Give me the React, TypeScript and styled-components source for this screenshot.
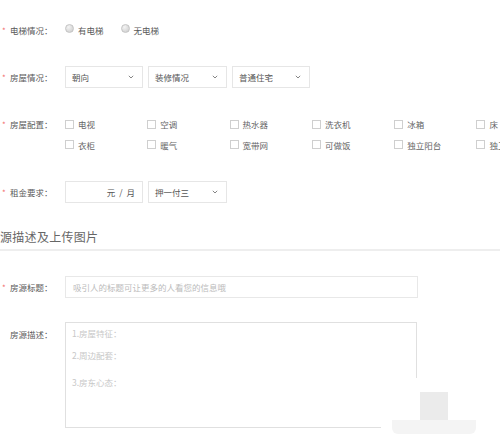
import React from "react";
import styled, { createGlobalStyle } from "styled-components";

const Global = createGlobalStyle`
  html, body { margin: 0; padding: 0; background: #fff; }
  body { width: 500px; height: 436px; overflow: hidden; font-family: "Noto Sans CJK SC", "Noto Sans", sans-serif; }
  #root { width: 500px; height: 436px; position: relative; overflow: hidden; }
`;

const Page = styled.div`
  display: flex;
  flex-direction: column;
  width: 500px;
  font-size: 8.5px;
  color: #555;
`;

const Row = styled.div<{ $top: number; $h: number; $align?: string }>`
  display: flex;
  align-items: ${(p) => p.$align || "center"};
  margin-top: ${(p) => p.$top}px;
  min-height: ${(p) => p.$h}px;
`;

const Label = styled.div<{ $pt?: number }>`
  width: 65px;
  flex: none;
  display: flex;
  align-items: center;
  padding-top: ${(p) => p.$pt || 0}px;
  box-sizing: border-box;
  color: #5a5a5a;
  white-space: nowrap;
`;

const Star = styled.span<{ $hide?: boolean }>`
  width: 10px;
  padding-left: 2px;
  box-sizing: border-box;
  color: #f36b6b;
  font-size: 8px;
  visibility: ${(p) => (p.$hide ? "hidden" : "visible")};
`;

const RadioGroup = styled.div`
  display: flex;
  align-items: center;
  gap: 17px;
`;

const RadioItem = styled.label`
  display: flex;
  align-items: center;
  gap: 4px;
  color: #5a5a5a;
`;

const RadioDot = styled.span`
  width: 7px;
  height: 7px;
  border-radius: 50%;
  background: radial-gradient(circle at 35% 30%, #f4f4f4, #c9c9c9);
  border: 0.5px solid #c4c4c4;
  margin-top: -3px;
`;

const Controls = styled.div`
  display: flex;
  gap: 5px;
`;

const Box = styled.div<{ $w: number; $h?: number }>`
  width: ${(p) => p.$w}px;
  height: ${(p) => p.$h || 22}px;
  border: 1px solid #e6e6e6;
  box-sizing: border-box;
  display: flex;
  align-items: center;
  flex: none;
`;

const SelectBox = styled(Box)`
  justify-content: space-between;
  padding: 0 8px 0 6px;
  color: #555;
`;

const RentBox = styled(Box)`
  justify-content: flex-end;
  padding-right: 7px;
  color: #555;
  word-spacing: 2px;
`;

const Chevron = () => (
  <svg width="6" height="4" viewBox="0 0 6 4">
    <path d="M0.8 0.8 L3 3 L5.2 0.8" fill="none" stroke="#777" strokeWidth="0.9" />
  </svg>
);

const CheckGrid = styled.div`
  display: grid;
  grid-template-columns: repeat(6, 82.3px);
  grid-auto-rows: 20.5px;
`;

const CheckItem = styled.div`
  display: flex;
  align-items: center;
  gap: 4px;
  color: #666;
  white-space: nowrap;
`;

const CheckSquare = styled.span`
  width: 7px;
  height: 7px;
  border: 1px solid #cfcfcf;
  flex: none;
`;

const Heading = styled.div`
  margin-top: 25px;
  font-size: 12px;
  color: #666;
  letter-spacing: 0.3px;
  line-height: 18px;
`;

const Divider = styled.div`
  margin-top: 3px;
  height: 2px;
  background: #eeeeee;
`;

const TitleInput = styled(Box)`
  padding-left: 7px;
  color: #bbb;
  border-color: #e8e8e8;
`;

const TextArea = styled.div`
  width: 352px;
  height: 106px;
  border: 1px solid #e0e0e0;
  box-sizing: border-box;
  padding: 4px 6px;
  color: #c8c8c8;
  display: flex;
  flex-direction: column;
`;

const Line = styled.div<{ $mt: number }>`
  margin-top: ${(p) => p.$mt}px;
  line-height: 12px;
`;

const Overlay = styled.div`
  position: absolute;
  left: 381px;
  top: 378px;
  width: 119px;
  height: 58px;
  background: #fff;
`;

const OverlayBlock = styled.div<{ $l: number; $t: number; $w: number; $h: number; $c: string; $r?: string }>`
  position: absolute;
  left: ${(p) => p.$l}px;
  top: ${(p) => p.$t}px;
  width: ${(p) => p.$w}px;
  height: ${(p) => p.$h}px;
  background: ${(p) => p.$c};
  border-radius: ${(p) => p.$r || "0"};
`;

const checks = [
  "电视", "空调", "热水器", "洗衣机", "冰箱", "床",
  "衣柜", "暖气", "宽带网", "可做饭", "独立阳台", "独卫",
];

export default function App() {
  return (
    <>
      <Global />
      <Page>
        <Row $top={21} $h={18}>
          <Label><Star>*</Star>电梯情况：</Label>
          <RadioGroup>
            <RadioItem><RadioDot />有电梯</RadioItem>
            <RadioItem><RadioDot />无电梯</RadioItem>
          </RadioGroup>
        </Row>

        <Row $top={27} $h={22}>
          <Label><Star>*</Star>房屋情况：</Label>
          <Controls>
            <SelectBox $w={78}>朝向<Chevron /></SelectBox>
            <SelectBox $w={79}>装修情况<Chevron /></SelectBox>
            <SelectBox $w={78}>普通住宅<Chevron /></SelectBox>
          </Controls>
        </Row>

        <Row $top={26} $h={41} $align="flex-start">
          <Label $pt={4}><Star>*</Star>房屋配置：</Label>
          <CheckGrid>
            {checks.map((c) => (
              <CheckItem key={c}><CheckSquare />{c}</CheckItem>
            ))}
          </CheckGrid>
        </Row>

        <Row $top={26} $h={22}>
          <Label><Star>*</Star>租金要求：</Label>
          <Controls>
            <RentBox $w={78}>元 / 月</RentBox>
            <SelectBox $w={79}>押一付三<Chevron /></SelectBox>
          </Controls>
        </Row>

        <Heading>源描述及上传图片</Heading>
        <Divider />

        <Row $top={25} $h={22}>
          <Label><Star>*</Star>房源标题：</Label>
          <TitleInput $w={353}>吸引人的标题可让更多的人看您的信息哦</TitleInput>
        </Row>

        <Row $top={24} $h={106} $align="flex-start">
          <Label $pt={6}><Star $hide>*</Star>房源描述：</Label>
          <TextArea>
            <Line $mt={0}>1.房屋特征：</Line>
            <Line $mt={10}>2.周边配套：</Line>
            <Line $mt={15}>3.房东心态：</Line>
          </TextArea>
        </Row>
      </Page>
      <Overlay>
        <OverlayBlock $l={39} $t={14} $w={28} $h={28} $c="#ebebeb" />
        <OverlayBlock $l={11} $t={42} $w={84} $h={14} $c="#f4f4f4" $r="0 0 6px 6px" />
      </Overlay>
    </>
  );
}
